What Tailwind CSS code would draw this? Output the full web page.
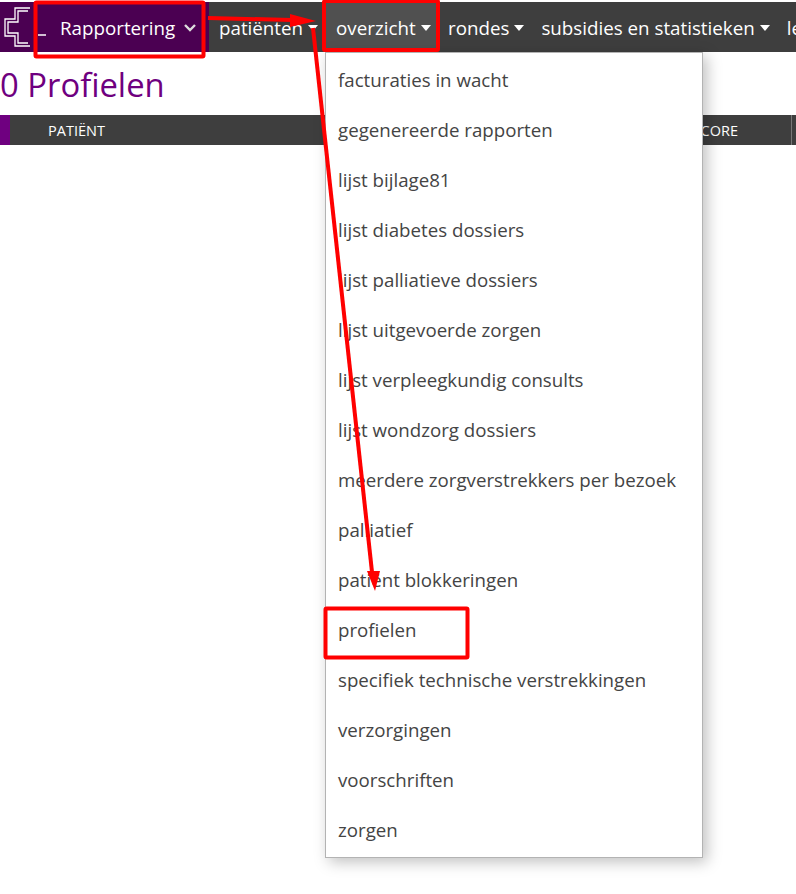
<!DOCTYPE html>
<html lang="nl">
<head>
  <meta charset="UTF-8" />
  <meta name="viewport" content="width=device-width, initial-scale=1.0" />
  <title>Profielen</title>
  <script src="https://cdn.jsdelivr.net/npm/@tailwindcss/browser@4"></script>
</head>
<body class="relative h-[894px] w-[796px] overflow-hidden bg-white font-['Open_Sans',sans-serif] text-[#444]">
  <!-- navbar -->
  <nav class="mt-[2px] flex h-[50px] items-center overflow-hidden bg-[#3e3e3e] text-[18.75px] text-white">
    <div class="flex h-full w-[209px] shrink-0 items-center bg-[#4b0052]">
      <svg class="ml-[4px] h-[40px] w-[44px] shrink-0" viewBox="0 0 44 40" fill="none" stroke="white" stroke-width="1.3">
        <path d="M26 1H11V12H1V29H11V39H26" />
        <path d="M24 4H14V15H4V26H14V36H24" />
        <path d="M34 28H42" stroke-width="1.5" />
      </svg>
      <span class="ml-[12px] pt-[2px]">Rapportering</span>
      <svg class="ml-[9px] mt-[1px] h-[10px] w-[12px]" viewBox="0 0 12 10" fill="none" stroke="#ddd" stroke-width="2.4"><path d="M1 2L6 7L11 2" /></svg>
    </div>
    <div class="flex h-full shrink-0 items-center pl-[10px]">
      <span class="pt-[2px]">patiënten</span><i class="ml-[5px] mr-[6px] mt-[1px] h-0 w-0 border-x-[5px] border-t-[6px] border-x-transparent border-t-white"></i>
    </div>
    <div class="flex h-full w-[113px] shrink-0 items-center bg-[#505050] pl-[12px]">
      <span class="pt-[2px]">overzicht</span><i class="ml-[5px] mt-[1px] h-0 w-0 border-x-[5px] border-t-[6px] border-x-transparent border-t-white"></i>
    </div>
    <div class="flex h-full shrink-0 items-center pl-[11px]">
      <span class="pt-[2px]">rondes</span><i class="ml-[5px] mt-[1px] h-0 w-0 border-x-[5px] border-t-[6px] border-x-transparent border-t-white"></i>
    </div>
    <div class="flex h-full shrink-0 items-center pl-[17px]">
      <span class="pt-[2px]">subsidies en statistieken</span><i class="ml-[5px] mt-[1px] h-0 w-0 border-x-[5px] border-t-[6px] border-x-transparent border-t-white"></i>
    </div>
    <span class="ml-[17px] shrink-0 pt-[2px]">le</span>
  </nav>

  <h1 class="mt-[11px] h-[52px] text-[32.8px] leading-[44px] text-[#6f007f]">0 Profielen</h1>

  <!-- table head -->
  <div class="flex h-[30px] items-center bg-[#3e3e3e] text-[14.5px] text-white">
    <div class="h-full w-[10px] bg-[#6f0080]"></div>
    <span class="ml-[38px] pt-[2px]">PATIËNT</span>
    <span class="ml-auto pt-[2px]">SCORE</span>
    <span class="ml-[53px] mr-[4px] h-full w-px bg-[#777]"></span>
  </div>

  <!-- dropdown -->
  <ul class="absolute left-[325px] top-[52px] w-[378px] border border-[#b3b3b3] bg-white py-[2px] text-[18.7px] leading-[50px] text-[#444] shadow-[4px_4px_14px_rgba(0,0,0,0.25)]">
    <li class="h-[50px] pl-[12px]">facturaties in wacht</li>
    <li class="h-[50px] pl-[12px]">gegenereerde rapporten</li>
    <li class="h-[50px] pl-[12px]">lijst bijlage81</li>
    <li class="h-[50px] pl-[12px]">lijst diabetes dossiers</li>
    <li class="h-[50px] pl-[12px]">lijst palliatieve dossiers</li>
    <li class="h-[50px] pl-[12px]">lijst uitgevoerde zorgen</li>
    <li class="h-[50px] pl-[12px]">lijst verpleegkundig consults</li>
    <li class="h-[50px] pl-[12px]">lijst wondzorg dossiers</li>
    <li class="h-[50px] pl-[12px]">meerdere zorgverstrekkers per bezoek</li>
    <li class="h-[50px] pl-[12px]">palliatief</li>
    <li class="h-[50px] pl-[12px]">patiënt blokkeringen</li>
    <li class="h-[50px] pl-[12px]">profielen</li>
    <li class="h-[50px] pl-[12px]">specifiek technische verstrekkingen</li>
    <li class="h-[50px] pl-[12px]">verzorgingen</li>
    <li class="h-[50px] pl-[12px]">voorschriften</li>
    <li class="h-[50px] pl-[12px]">zorgen</li>
  </ul>

  <!-- annotations -->
  <svg class="pointer-events-none absolute left-0 top-0" width="796" height="894" viewBox="0 0 796 894" fill="none" stroke="#ff0000">
    <rect x="35.5" y="2.5" width="168" height="54" rx="1" stroke-width="4" />
    <rect x="324" y="1" width="114" height="49" rx="1" stroke-width="4" />
    <rect x="325.5" y="608.5" width="142" height="49" rx="1" stroke-width="4" />
    <path d="M208 18L292 20" stroke-width="4" />
    <path d="M290 14L316 21L290 27Z" fill="#ff0000" stroke="none" />
    <path d="M313 28L372 572" stroke-width="4" />
    <path d="M367 571L380 571L375 591Z" fill="#ff0000" stroke="none" />
  </svg>
</body>
</html>
